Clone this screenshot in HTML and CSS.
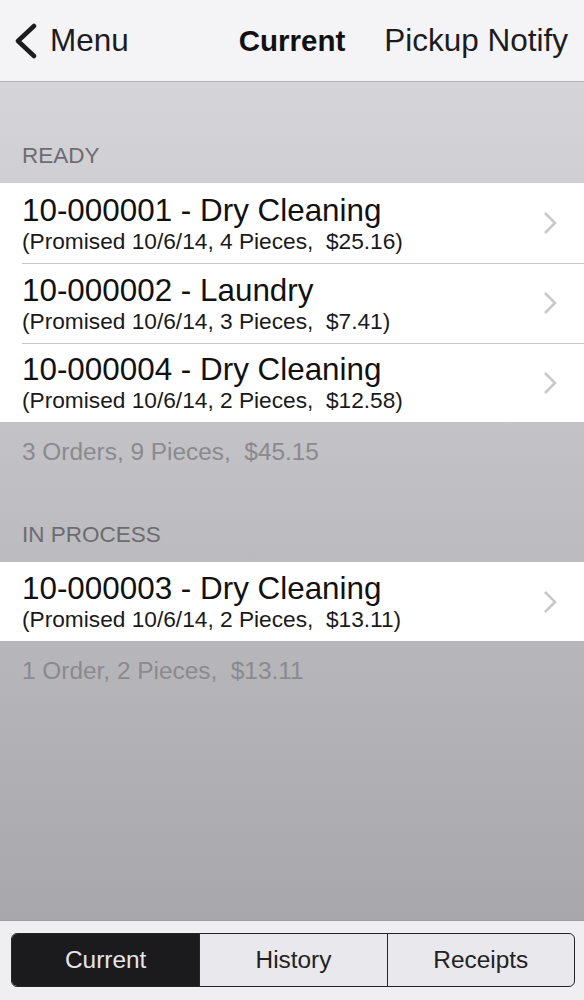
FILE: index.html
```html
<!DOCTYPE html>
<html>
<head>
<meta charset="utf-8">
<link rel="stylesheet" href="styles.css">
</head>
<body>
<div class="screen">
  <header class="navbar">
    <div class="nav-back">
      <svg class="back-icon" width="26" height="36" viewBox="0 0 26 36"><path d="M21 3 L5 18 L21 33" fill="none" stroke="#1c1c1e" stroke-width="4.5" stroke-linecap="round" stroke-linejoin="round"/></svg>
      <span>Menu</span>
    </div>
    <div class="nav-title">Current</div>
    <div class="nav-right">Pickup Notify</div>
  </header>

  <main class="content">
    <div class="section-header first">READY</div>
    <ul class="list">
      <li class="row">
        <div class="row-text">
          <div class="row-title">10-000001 - Dry Cleaning</div>
          <div class="row-sub">(Promised 10/6/14, 4 Pieces,&nbsp; $25.16)</div>
        </div>
        <svg class="chev" width="16" height="24" viewBox="0 0 16 24"><path d="M3 2 L13 12 L3 22" fill="none" stroke="#c7c7cc" stroke-width="2.5"/></svg>
      </li>
      <li class="row">
        <div class="row-text">
          <div class="row-title">10-000002 - Laundry</div>
          <div class="row-sub">(Promised 10/6/14, 3 Pieces,&nbsp; $7.41)</div>
        </div>
        <svg class="chev" width="16" height="24" viewBox="0 0 16 24"><path d="M3 2 L13 12 L3 22" fill="none" stroke="#c7c7cc" stroke-width="2.5"/></svg>
      </li>
      <li class="row">
        <div class="row-text">
          <div class="row-title">10-000004 - Dry Cleaning</div>
          <div class="row-sub">(Promised 10/6/14, 2 Pieces,&nbsp; $12.58)</div>
        </div>
        <svg class="chev" width="16" height="24" viewBox="0 0 16 24"><path d="M3 2 L13 12 L3 22" fill="none" stroke="#c7c7cc" stroke-width="2.5"/></svg>
      </li>
    </ul>
    <div class="section-footer">3 Orders, 9 Pieces,&nbsp; $45.15</div>

    <div class="section-header">IN PROCESS</div>
    <ul class="list">
      <li class="row">
        <div class="row-text">
          <div class="row-title">10-000003 - Dry Cleaning</div>
          <div class="row-sub">(Promised 10/6/14, 2 Pieces,&nbsp; $13.11)</div>
        </div>
        <svg class="chev" width="16" height="24" viewBox="0 0 16 24"><path d="M3 2 L13 12 L3 22" fill="none" stroke="#c7c7cc" stroke-width="2.5"/></svg>
      </li>
    </ul>
    <div class="section-footer">1 Order, 2 Pieces,&nbsp; $13.11</div>
  </main>

  <footer class="tabbar">
    <div class="segmented">
      <div class="seg active">Current</div>
      <div class="seg">History</div>
      <div class="seg">Receipts</div>
    </div>
  </footer>
</div>
</body>
</html>
```

FILE: styles.css
```css
* { box-sizing: border-box; }
html, body { margin: 0; padding: 0; }
body {
  font-family: "Liberation Sans", Arial, sans-serif;
  background: #f0eff2;
}
.screen {
  width: 584px;
  height: 1000px;
  display: flex;
  flex-direction: column;
  overflow: hidden;
}

/* nav bar */
.navbar {
  height: 82px;
  flex: none;
  background: #f4f3f6;
  border-bottom: 1px solid #b1b0b4;
  display: grid;
  grid-template-columns: 1fr auto 1fr;
  align-items: center;
  font-size: 31.5px;
  color: #1c1c1e;
}
.nav-back {
  display: flex;
  align-items: center;
  padding-left: 13px;
  gap: 11px;
}
.back-icon { display: block; }
.nav-title {
  font-weight: bold;
  color: #111;
  font-size: 29.5px;
}
.nav-right {
  justify-self: end;
  padding-right: 16px;
}

/* content */
.content {
  flex: 1;
  background: linear-gradient(to bottom, #d5d4d8 0%, #c1c0c4 45%, #a8a7ab 100%);
}
.section-header {
  font-size: 22.5px;
  line-height: 26px;
  color: #6d6c71;
  padding: 57px 22px 14px;
}
.section-header.first { padding-top: 61px; }
.list {
  list-style: none;
  margin: 0;
  padding: 0;
  background: #fff;
}
.row {
  position: relative;
  display: flex;
  align-items: center;
  height: 80px;
  padding: 0 26px 0 22px;
}
.row + .row::before {
  content: "";
  position: absolute;
  left: 22px;
  right: 0;
  top: 0;
  height: 1px;
  background: #c8c7cc;
}
.row:last-child { height: 79px; }
.row-text {
  flex: 1;
  padding-top: 1px;
}
.row-title {
  font-size: 31.4px;
  line-height: 34px;
  color: #111;
}
.row-sub {
  font-size: 22.7px;
  line-height: 26px;
  color: #1a1a1a;
}
.chev { display: block; flex: none; }
.section-footer {
  font-size: 24.4px;
  line-height: 26px;
  color: #8b8a8f;
  padding: 17px 22px 0;
  height: 43px;
}

/* tab bar */
.tabbar {
  flex: none;
  height: 80px;
  background: #efeef1;
  border-top: 1px solid #9f9ea2;
  padding: 12px 9px 0 11px;
}
.segmented {
  display: grid;
  grid-template-columns: 1fr 1fr 1fr;
  height: 54px;
  border: 1.5px solid #262628;
  border-radius: 6px;
  overflow: hidden;
  background: #e9e8ec;
}
.seg {
  display: flex;
  align-items: center;
  justify-content: center;
  font-size: 24.4px;
  color: #222;
}
.seg + .seg { border-left: 1.5px solid #262628; }
.seg.active {
  background: #1b1b1d;
  color: #e6e6e8;
}
```
